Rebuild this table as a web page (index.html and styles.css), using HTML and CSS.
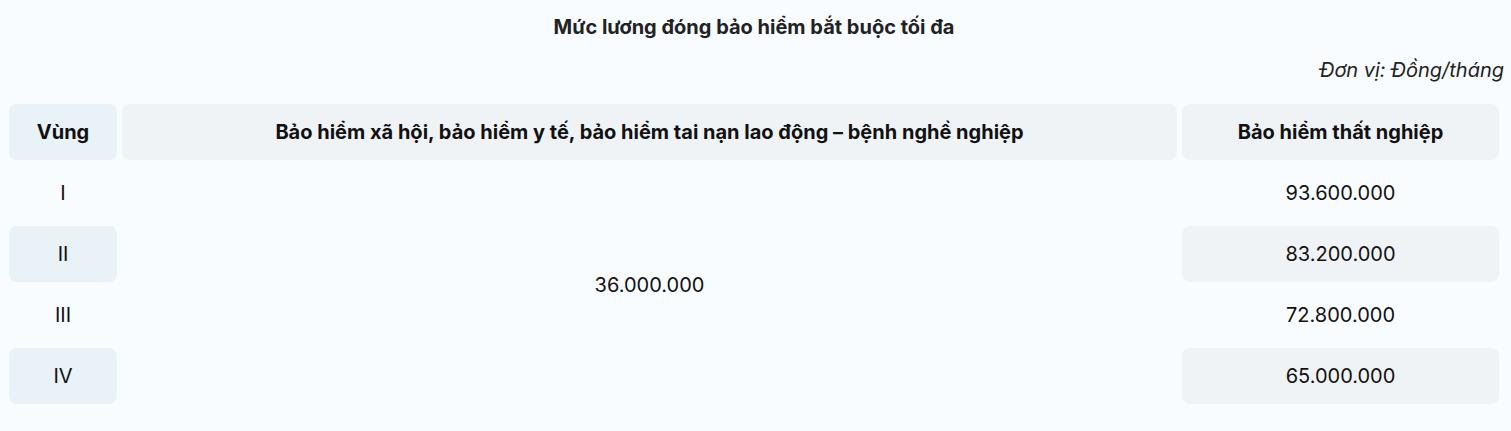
FILE: index.html
```html
<!DOCTYPE html>
<html>
    <head>
    <meta charset="utf-8">
    <meta name="viewport" content="width=device-width, initial-scale=1.0">
    <title>Mức lương đóng bảo hiểm</title>
    <link rel="stylesheet" href="styles.css">
    </head>
    <body>
    <div class="wrap">
        <p class="title">Mức lương đóng bảo hiểm bắt buộc tối đa</p>
        <p class="unit">Đơn vị: Đồng/tháng</p>
        <table class="salary">
            <colgroup>
                <col class="c-zone">
                <col>
                <col class="c-job">
            </colgroup>
            <thead>
                <tr>
                    <th class="zone">Vùng</th>
                    <th>Bảo hiểm xã hội, bảo hiểm y tế, bảo hiểm tai nạn lao động – bệnh nghề nghiệp</th>
                    <th>Bảo hiểm thất nghiệp</th>
                </tr>
            </thead>
            <tbody>
                <tr>
                    <td class="zone">I</td>
                    <td class="common" rowspan="4">36.000.000</td>
                    <td>93.600.000</td>
                </tr>
                <tr class="alt">
                    <td class="zone">II</td>
                    <td>83.200.000</td>
                </tr>
                <tr>
                    <td class="zone">III</td>
                    <td>72.800.000</td>
                </tr>
                <tr class="alt">
                    <td class="zone">IV</td>
                    <td>65.000.000</td>
                </tr>
            </tbody>
        </table>
    </div>
    </body>
</html>
```

FILE: styles.css
```css
body {
    margin: 0;
    padding: 0;
    background-color: #f8fcfe;
    font-family: Inter, "Noto Sans", sans-serif;
    color: #111;
}
.wrap{
    padding: 13px 7px 20px 4px;
}
.title{
    margin: 0;
    text-align: center;
    font-size: 20px;
    line-height: 28px;
    font-weight: 700;
    color: #222;
}
.unit{
    margin: 15px 0 0 0;
    text-align: right;
    font-size: 20px;
    line-height: 28px;
    font-style: italic;
    color: #222;
}
.salary{
    margin-top: 15px;
    width: 100%;
    table-layout: fixed;
    border-collapse: separate;
    border-spacing: 5px;
    font-size: 20px;
}
.c-zone{
    width: 108px;
}
.c-job{
    width: 317px;
}
.salary th,
.salary td{
    height: 56px;
    padding: 0 8px;
    text-align: center;
    vertical-align: middle;
    border-radius: 8px;
    box-sizing: border-box;
}
.salary th{
    background-color: #f0f3f6;
    font-weight: 700;
}
.salary th.zone{
    background-color: #e8f2f7;
}
.alt td{
    background-color: #f0f3f6;
}
.alt td.zone{
    background-color: #e8f2f7;
}
.salary td.common{
    background-color: transparent;
}
```
